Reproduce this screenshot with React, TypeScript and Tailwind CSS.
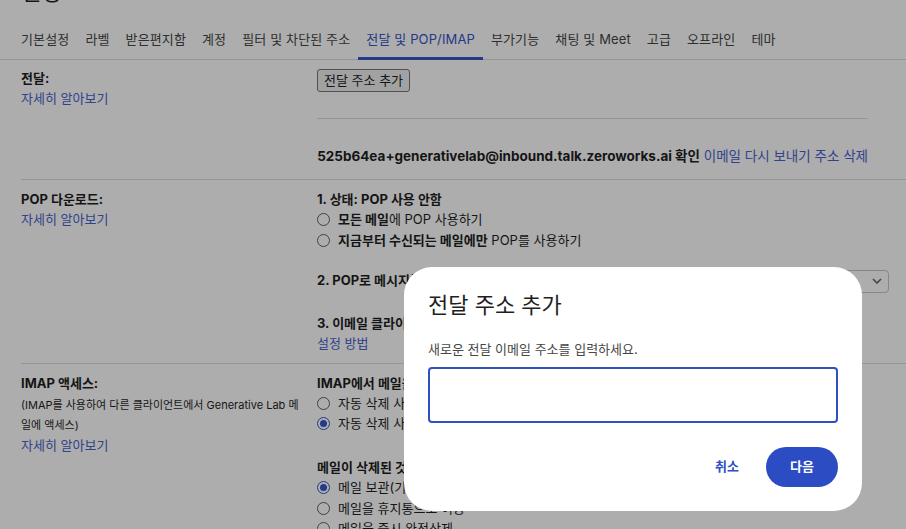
import React from "react";

const tabs = [
  "기본설정",
  "라벨",
  "받은편지함",
  "계정",
  "필터 및 차단된 주소",
  "전달 및 POP/IMAP",
  "부가기능",
  "채팅 및 Meet",
  "고급",
  "오프라인",
  "테마",
];

function Radio({ checked = false }: { checked?: boolean }) {
  if (checked) {
    return (
      <span className="flex h-[13px] w-[13px] shrink-0 items-center justify-center rounded-full border-[1.5px] border-[#3554c9] bg-white">
        <span className="h-[7px] w-[7px] rounded-full bg-[#3554c9]" />
      </span>
    );
  }
  return (
    <span className="h-[13px] w-[13px] shrink-0 rounded-full border border-[#5f6368] bg-white" />
  );
}

function Option({
  checked,
  children,
}: {
  checked?: boolean;
  children: React.ReactNode;
}) {
  return (
    <div className="flex h-[20.5px] items-center gap-2 whitespace-nowrap">
      <Radio checked={checked} />
      <span>{children}</span>
    </div>
  );
}

function LearnMore() {
  return <a className="block leading-5 text-[#4a63cf]">자세히 알아보기</a>;
}

export default function App() {
  return (
    <div className="relative h-[529px] w-[906px] overflow-hidden bg-white font-['Inter','Noto_Sans_CJK_KR',sans-serif] text-[13px] text-[#1f1f1f]">
      <h1 className="-mt-[19px] ml-[21px] text-[22px] leading-[22px]">설정</h1>

      <nav className="mt-[17px] flex border-b border-[#dadce0] pl-[13px] tracking-[0.01em]">
        {tabs.map((tab) =>
          tab === "전달 및 POP/IMAP" ? (
            <div
              key={tab}
              className="-mb-px flex h-[40px] items-center whitespace-nowrap border-b-[3px] border-[#3554c9] px-2 pt-[3px] text-[#3554c9]"
            >
              {tab}
            </div>
          ) : (
            <div
              key={tab}
              className="flex h-[39px] items-center whitespace-nowrap px-2 text-[#444746]"
            >
              {tab}
            </div>
          )
        )}
      </nav>

      {/* 전달 */}
      <section className="ml-[21px] flex border-b border-[#dadce0] pb-[13px] pt-[8px]">
        <div className="w-[296px] shrink-0">
          <div className="font-bold leading-5">전달:</div>
          <LearnMore />
        </div>
        <div className="w-[551px] pt-[1px]">
          <button className="h-[23px] rounded-[3px] border border-[#767676] bg-[#efefef] px-[6px] text-[13px] leading-none">
            전달 주소 추가
          </button>
          <div className="mt-[26px] border-t border-[#dadce0]" />
          <div className="mt-[27px] whitespace-nowrap text-right text-[13.5px] leading-5">
            <span className="font-bold">
              525b64ea+generativelab@inbound.talk.zeroworks.ai 확인
            </span>{" "}
            <a className="text-[#4a63cf]">이메일 다시 보내기</a>{" "}
            <a className="text-[#4a63cf]">주소 삭제</a>
          </div>
        </div>
      </section>

      {/* POP 다운로드 */}
      <section className="ml-[21px] flex border-b border-[#dadce0] pb-[10px] pt-[9px]">
        <div className="w-[296px] shrink-0">
          <div className="font-bold leading-5">POP 다운로드:</div>
          <LearnMore />
        </div>
        <div className="w-[551px]">
          <div className="h-[20.5px] font-bold leading-5">1. 상태: POP 사용 안함</div>
          <Option>
            <b>모든 메일</b>에 POP 사용하기
          </Option>
          <Option>
            <b>지금부터 수신되는 메일에만</b> POP를 사용하기
          </Option>
          <div className="mt-[19px] flex h-[23px] w-[572px] items-center gap-2">
            <span className="whitespace-nowrap font-bold">2. POP로 메시지를 여는 경우</span>
            <div className="flex h-[23px] flex-1 items-center justify-between rounded-[4px] border border-[#c4c7c5] bg-white pl-2 pr-[6px]">
              <span className="whitespace-nowrap">Gmail 사본을 받은편지함에 보관</span>
              <svg width="10" height="6" viewBox="0 0 10 6" fill="none">
                <path d="M1 1l4 4 4-4" stroke="#5f6368" strokeWidth="1.6" />
              </svg>
            </div>
          </div>
          <div className="mt-[20px] whitespace-nowrap font-bold leading-5">
            3. 이메일 클라이언트 구성
          </div>
          <a className="block leading-5 text-[#4a63cf]">설정 방법</a>
        </div>
      </section>

      {/* IMAP 액세스 */}
      <section className="ml-[21px] flex pt-[9px]">
        <div className="w-[296px] shrink-0">
          <div className="font-bold leading-5">IMAP 액세스:</div>
          <div className="mt-[2px] text-[11px] leading-5">
            (IMAP를 사용하여 다른 클라이언트에서 Generative Lab 메<br />
            일에 액세스)
          </div>
          <LearnMore />
        </div>
        <div className="w-[551px]">
          <div className="h-[20.5px] font-bold leading-5">
            IMAP에서 메일을 삭제된 것으로 표시하는 경우:
          </div>
          <Option>자동 삭제 사용 - 서버를 즉시 업데이트합니다.</Option>
          <Option checked>자동 삭제 사용 중지 - 클라이언트를 기다립니다.</Option>
          <div className="mt-[23px] h-[20.5px] font-bold leading-5">
            메일이 삭제된 것으로 표시되는 경우:
          </div>
          <Option checked>메일 보관(기본값)</Option>
          <Option>메일을 휴지통으로 이동</Option>
          <Option>메일을 즉시 완전삭제</Option>
        </div>
      </section>

      {/* scrim + dialog */}
      <div className="absolute inset-0 bg-black/[0.32]" />
      <div className="absolute left-[404px] top-[267px] h-[244px] w-[458px] rounded-[28px] bg-white px-[24px] pt-[24px]">
        <h2 className="text-[22px] leading-[28px] text-[#1f1f1f]">전달 주소 추가</h2>
        <p className="mt-[20px] leading-5 text-[#444746]">새로운 전달 이메일 주소를 입력하세요.</p>
        <input
          className="mt-[8px] block h-[56px] w-[410px] rounded-[4px] border-2 border-[#3050c0] px-3 outline-none"
          type="text"
        />
        <div className="mt-[24px] flex w-[410px] items-center justify-end">
          <button className="mr-[15px] h-10 px-3 font-semibold text-[#3050c0]">취소</button>
          <button className="h-10 w-[72px] rounded-full bg-[#2b4cc2] font-semibold text-white">
            다음
          </button>
        </div>
      </div>
    </div>
  );
}
